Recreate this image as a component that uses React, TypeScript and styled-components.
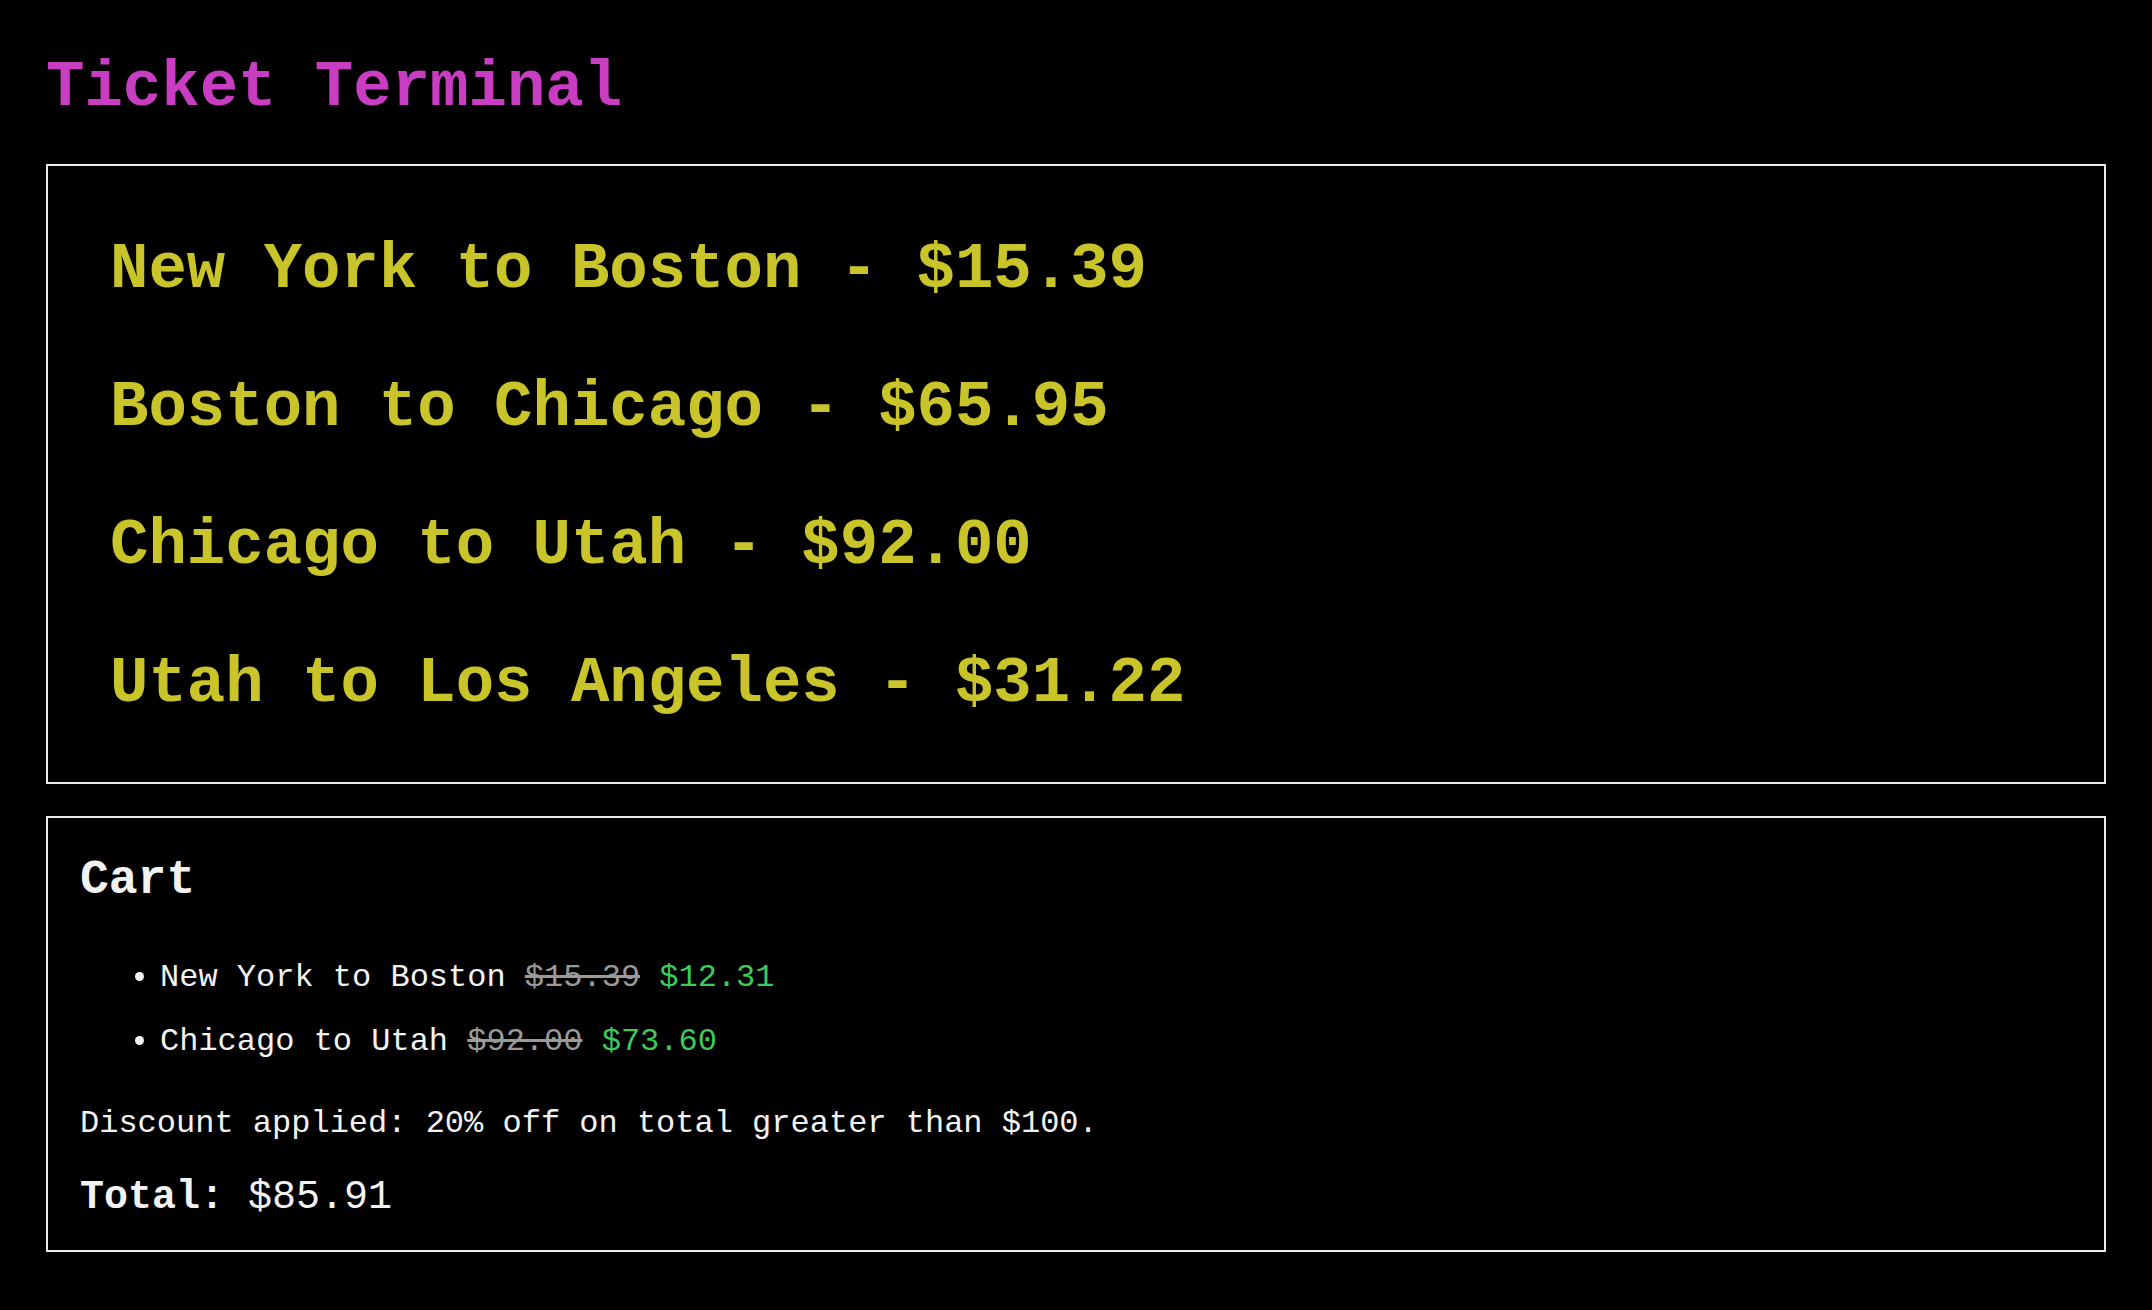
import React from "react";
import styled, { createGlobalStyle } from "styled-components";

const GlobalStyle = createGlobalStyle`
  html, body {
    background: #000;
  }
  body {
    margin: 0;
    font-family: "Liberation Mono", "Courier New", monospace;
    color: #f2f2f2;
  }
`;

const Page = styled.main`
  display: flex;
  flex-direction: column;
  padding: 50px 46px 40px;
`;

const Title = styled.h1`
  margin: 0 0 38px;
  font-size: 64px;
  line-height: 76px;
  font-weight: 700;
  color: #c93dc3;
`;

const Panel = styled.section`
  border: 2px solid #ebebeb;
`;

const RoutesPanel = styled(Panel)`
  display: flex;
  flex-direction: column;
  gap: 62px;
  padding: 66px 62px 60px;
`;

const RouteItem = styled.div`
  font-size: 64px;
  line-height: 76px;
  font-weight: 700;
  color: #c9c42a;
  white-space: pre;
`;

const CartPanel = styled(Panel)`
  margin-top: 32px;
  padding: 32px 32px 28px;
`;

const CartTitle = styled.h2`
  margin: 0;
  font-size: 48px;
  line-height: 60px;
  font-weight: 700;
  color: #f2f2f2;
`;

const CartList = styled.ul`
  margin: 48px 0 0;
  padding-left: 80px;
  display: flex;
  flex-direction: column;
  gap: 24px;
`;

const CartItem = styled.li`
  font-size: 32px;
  line-height: 40px;
  color: #f2f2f2;
`;

const OldPrice = styled.s`
  color: #9a9a9a;
`;

const NewPrice = styled.span`
  color: #3dca5c;
`;

const Discount = styled.p`
  margin: 42px 0 0;
  font-size: 32px;
  line-height: 40px;
  color: #f2f2f2;
`;

const Total = styled.p`
  margin: 30px 0 0;
  font-size: 40px;
  line-height: 48px;
  color: #f2f2f2;
`;

const TotalLabel = styled.strong`
  font-weight: 700;
`;

const routes = [
  { from: "New York", to: "Boston", price: 15.39 },
  { from: "Boston", to: "Chicago", price: 65.95 },
  { from: "Chicago", to: "Utah", price: 92.0 },
  { from: "Utah", to: "Los Angeles", price: 31.22 },
];

const cart = [
  { name: "New York to Boston", old: "$15.39", price: "$12.31" },
  { name: "Chicago to Utah", old: "$92.00", price: "$73.60" },
];

export default function App() {
  return (
    <>
      <GlobalStyle />
      <Page>
        <Title>Ticket Terminal</Title>
        <RoutesPanel>
          {routes.map((r) => (
            <RouteItem key={r.from + r.to}>
              {`${r.from} to ${r.to} - $${r.price.toFixed(2)}`}
            </RouteItem>
          ))}
        </RoutesPanel>
        <CartPanel>
          <CartTitle>Cart</CartTitle>
          <CartList>
            {cart.map((c) => (
              <CartItem key={c.name}>
                {c.name} <OldPrice>{c.old}</OldPrice> <NewPrice>{c.price}</NewPrice>
              </CartItem>
            ))}
          </CartList>
          <Discount>Discount applied: 20% off on total greater than $100.</Discount>
          <Total>
            <TotalLabel>Total:</TotalLabel> $85.91
          </Total>
        </CartPanel>
      </Page>
    </>
  );
}
